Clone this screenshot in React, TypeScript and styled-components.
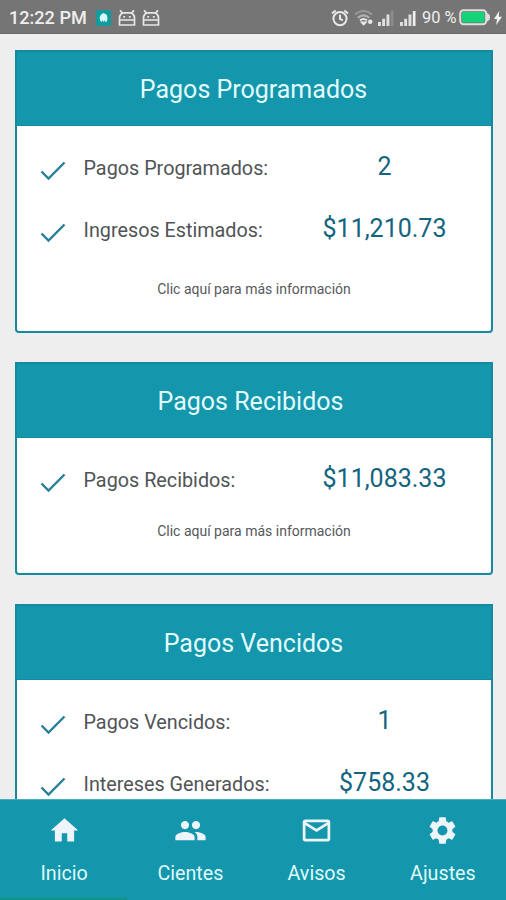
import React from 'react';
import styled, { createGlobalStyle } from 'styled-components';
import { MdHome, MdPeople, MdSettings } from 'react-icons/md';

const GlobalStyle = createGlobalStyle`
  * { box-sizing: border-box; }
  body { margin: 0; background: #eeeeee; font-family: Roboto, "Liberation Sans", sans-serif; }
`;

const Screen = styled.div`
  display: flex;
  flex-direction: column;
  width: 506px;
  height: 900px;
  overflow: hidden;
  background: #eeeeee;
`;

const StatusBar = styled.header`
  display: flex;
  flex: none;
  align-items: center;
  justify-content: space-between;
  height: 34px;
  padding: 2px 4px 0 9px;
  background: #757575;
  border-bottom: 1px solid #6b6b6b;
  color: #efefef;
`;

const StatusGroup = styled.div`
  display: flex;
  align-items: center;
  height: 100%;
`;

const Clock = styled.span`
  width: 87px;
  font-size: 18.1px;
  font-weight: 500;
  white-space: nowrap;
`;

const Battery = styled.span`
  margin-left: 6px;
  width: 37px;
  font-size: 16.4px;
  white-space: nowrap;
`;

const StatusIcon = styled.svg<{ $gap?: number }>`
  display: block;
  flex: none;
  margin-left: ${({ $gap = 0 }) => $gap}px;
`;

const Content = styled.main`
  flex: 1;
  min-height: 0;
  overflow: hidden;
  padding: 16px 13px 0 15px;
`;

const Card = styled.section<{ $height: number }>`
  height: ${({ $height }) => $height}px;
  margin-bottom: 29px;
  border: 2px solid #15899e;
  border-radius: 0 0 4px 4px;
  background: #fff;
`;

const CardTitle = styled.h2<{ $shift: number }>`
  display: flex;
  align-items: center;
  justify-content: center;
  height: 74px;
  margin: 0;
  padding: 2px ${({ $shift }) => $shift}px 0 0;
  background: #1496ad;
  border-bottom: 1px solid #118ba1;
  color: #e2fbfc;
  font-size: 25px;
  font-weight: 400;
`;

const Rows = styled.div`
  padding-top: 10px;
`;

const Row = styled.div`
  display: grid;
  grid-template-columns: 66.5px 194px 1fr;
  align-items: center;
  height: 62px;
`;

const Check = styled.svg`
  display: block;
  margin: 8px 0 0 23px;
`;

const Label = styled.span`
  margin-top: 2px;
  color: #505456;
  font-size: 19.8px;
  white-space: nowrap;
`;

const Value = styled.span`
  width: 214px;
  margin-top: -1px;
  color: #12647f;
  font-size: 25px;
  text-align: center;
`;

const MoreLink = styled.div<{ $gap: number }>`
  margin-top: ${({ $gap }) => $gap}px;
  color: #55595b;
  font-size: 14px;
  line-height: 20px;
  text-align: center;
`;

const NavBar = styled.nav`
  display: grid;
  flex: none;
  grid-template-columns: repeat(4, 1fr);
  height: 101px;
  padding-left: 1px;
  background: linear-gradient(#109488, #109488) 0 100% / 127px 2px no-repeat, #1496ad;
  border-top: 1px solid #4bacbb;
  color: #dffafb;
`;

const Tab = styled.div`
  display: flex;
  flex-direction: column;
  align-items: center;
  padding-top: 14px;
  font-size: 19.7px;
  line-height: 24px;

  svg { display: block; color: #edf4fa; margin-bottom: 15px; }
`;

const AppBadge = () => (
  <StatusIcon width="15" height="16" viewBox="0 0 15 16">
    <rect width="15" height="16" fill="#129a9d" />
    <path d="M3.5 7.5 5 4.5l2.5-1.5 3 1.5 1 3-.5 4-1.5.5-.8-2-.9 2.5-1-2.5-1 2-1.5-1z" fill="#d9fafa" />
  </StatusIcon>
);

const AndroidHead = ({ gap }: { gap: number }) => (
  <StatusIcon width="18" height="18" viewBox="0 0 18 18" $gap={gap} fill="none" stroke="#e8e8e8" strokeWidth="1.7">
    <path d="M1.5 16V9.5Q1.5 3.8 6.5 3.8h5q5 0 5 5.7V16zM4.6 4.4 2 1.2M13.4 4.4 16 1.2M1.5 11h15" />
    <path d="M5.3 7.9h1.8M10.9 7.9h1.8" />
  </StatusIcon>
);

const Alarm = () => (
  <StatusIcon width="18" height="18" viewBox="0 0 18 18" fill="none" stroke="#e8e8e8" strokeWidth="2">
    <circle cx="9" cy="9.6" r="6.6" />
    <path d="M9 5.7v4.2l2.8 1.4M1 4.4l3.6-3M17 4.4l-3.6-3" />
  </StatusIcon>
);

const Wifi = () => (
  <StatusIcon width="20" height="17" viewBox="0 0 20 17" $gap={5} fill="none" strokeWidth="2">
    <path d="M1 5.5q8.5-7 17 0" stroke="#999" />
    <path d="M3.7 8.8q5.8-4.8 11.6 0" stroke="#b2b2b2" />
    <path d="M6 11.4q3.5-2.7 7 0" stroke="#e4e4e4" />
    <path d="M8 13.4h3.4l-1.7 1.8z" fill="#e8e8e8" stroke="#e8e8e8" />
    <circle cx="16.2" cy="12.8" r="2.2" fill="#e8e8e8" />
  </StatusIcon>
);

const Signal = ({ gap, full }: { gap: number; full: boolean }) => (
  <StatusIcon width="16" height="16" viewBox="0 0 16 16" $gap={gap} fill="#e0e0e0">
    <path d="M0 12h2.9v4H0zM4.2 8.8h2.9V16H4.2zM8.5 4.6h2.9V16H8.5z" />
    <path d="M12.8 1h2.7v15h-2.7z" fill={full ? '#f0f0f0' : '#8c8c8c'} />
  </StatusIcon>
);

const BatteryIcon = () => (
  <StatusIcon width="32" height="17" viewBox="0 0 32 17">
    <rect x="1.2" y="1.2" width="26" height="14" rx="3.2" fill="none" stroke="#dedede" strokeWidth="2" />
    <rect x="3" y="3" width="22.5" height="10.5" rx="1" fill="#16d278" />
    <path d="M28 4q3 1 3 4.2t-3 4.2z" fill="#dedede" />
  </StatusIcon>
);

const Bolt = () => (
  <StatusIcon width="8" height="16" viewBox="0 0 8 16" $gap={3}>
    <path d="M5.2 1 0 9h3l-.8 6L8 6.8H4.8z" fill="#f2f2f2" />
  </StatusIcon>
);

const Envelope = ({ size }: { size: number }) => (
  <svg width={size} height={size} viewBox="0 0 24 24" fill="none" stroke="currentColor" strokeWidth="2">
    <rect x="3" y="5" width="18" height="14" rx="1" />
    <path d="m3.4 6.6 8.6 5.4 8.6-5.4" />
  </svg>
);

interface Summary {
  title: string;
  titleShift?: number;
  height: number;
  linkGap?: number;
  rows: [string, string][];
}

const summaries: Summary[] = [
  {
    title: 'Pagos Programados',
    titleShift: 1,
    height: 283,
    linkGap: 19,
    rows: [['Pagos Programados:', '2'], ['Ingresos Estimados:', '$11,210.73']],
  },
  {
    title: 'Pagos Recibidos',
    titleShift: 7,
    height: 213,
    linkGap: 11,
    rows: [['Pagos Recibidos:', '$11,083.33']],
  },
  {
    title: 'Pagos Vencidos',
    titleShift: 1,
    height: 283,
    rows: [['Pagos Vencidos:', '1'], ['Intereses Generados:', '$758.33']],
  },
];

const tabs = [
  { label: 'Inicio', Icon: MdHome },
  { label: 'Cientes', Icon: MdPeople },
  { label: 'Avisos', Icon: Envelope },
  { label: 'Ajustes', Icon: MdSettings },
];

export default function App() {
  return (
    <Screen>
      <GlobalStyle />
      <StatusBar>
        <StatusGroup>
          <Clock>12:22 PM</Clock>
          <AppBadge />
          <AndroidHead gap={7} />
          <AndroidHead gap={6} />
        </StatusGroup>
        <StatusGroup>
          <Alarm />
          <Wifi />
          <Signal gap={4} full={false} />
          <Signal gap={6} full />
          <Battery>90 %</Battery>
          <BatteryIcon />
          <Bolt />
        </StatusGroup>
      </StatusBar>
      <Content>
        {summaries.map(({ title, titleShift = 0, height, linkGap, rows }) => (
          <Card key={title} $height={height}>
            <CardTitle $shift={titleShift}>{title}</CardTitle>
            <Rows>
              {rows.map(([label, value]) => (
                <Row key={label}>
                  <Check width="26" height="20" viewBox="0 0 26 20">
                    <path d="m1.5 10.5 7 7L24.5 1.5" fill="none" stroke="#287f98" strokeWidth="2.4" />
                  </Check>
                  <Label>{label}</Label>
                  <Value>{value}</Value>
                </Row>
              ))}
            </Rows>
            {linkGap !== undefined && <MoreLink $gap={linkGap}>Clic aquí para más información</MoreLink>}
          </Card>
        ))}
      </Content>
      <NavBar>
        {tabs.map(({ label, Icon }) => (
          <Tab key={label}>
            <Icon size={33} />
            {label}
          </Tab>
        ))}
      </NavBar>
    </Screen>
  );
}
